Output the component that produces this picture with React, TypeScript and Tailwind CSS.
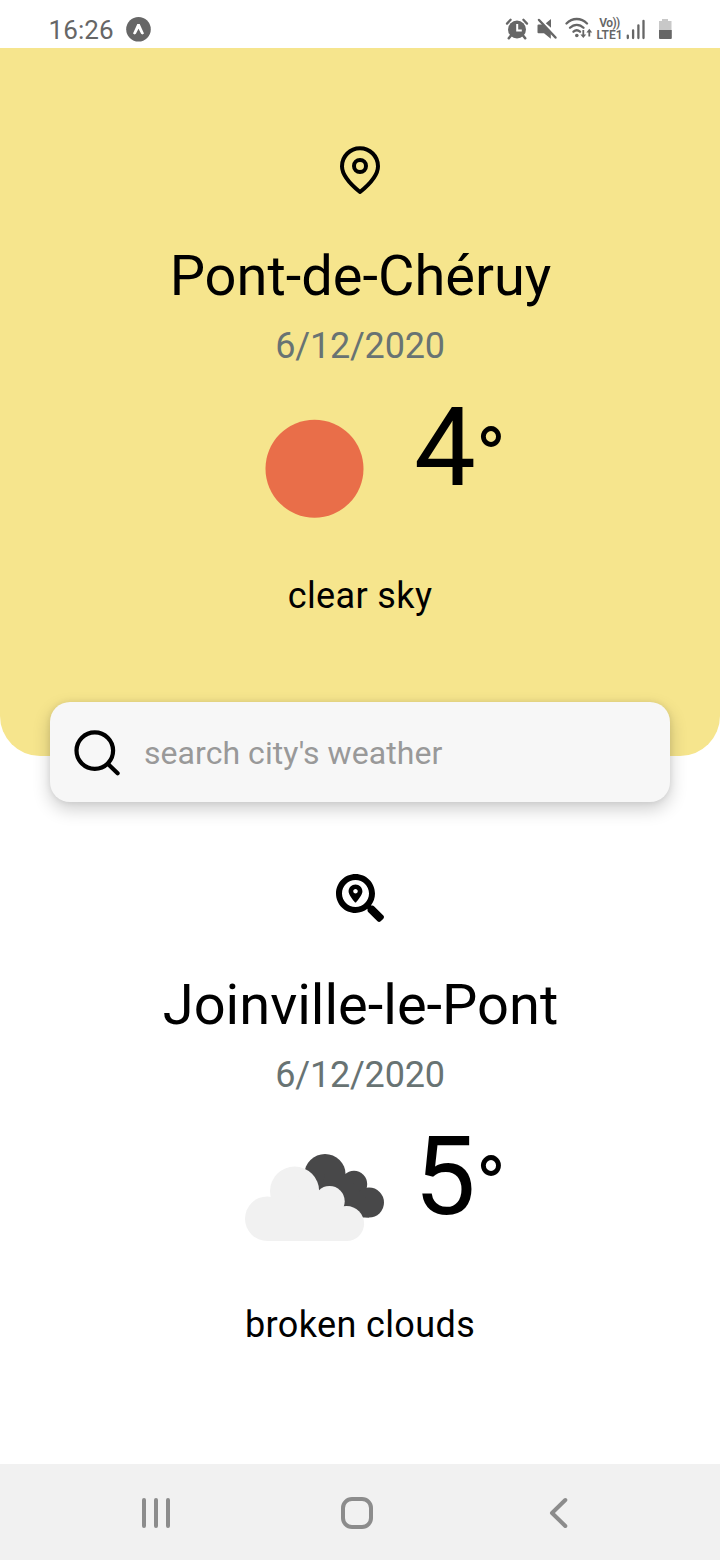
import type { ReactNode } from "react";
import { FaSearchLocation } from "react-icons/fa";

function StatusBar() {
  return (
    <header className="flex h-12 items-start bg-white text-[#666666]">
      <span className="ml-[48.5px] mt-[14px] w-[65.5px] whitespace-nowrap text-[26px] leading-[32px] tracking-[0.1px]">16:26</span>
      <svg className="ml-3 mt-4" width="26" height="26" viewBox="0 0 26 26">
        <circle cx="12.5" cy="13.2" r="12.3" fill="#666" />
        <path d="M11.3 8h2.4l4.3 9.4-1.6 1.1-1.3-.7-2.6-5-2.6 5-1.3.7L7 17.4Z" fill="#fff" />
      </svg>
      <div className="ml-auto mr-[47px] flex h-12 items-start pt-[17px]">
        <svg width="24" height="24" viewBox="0 0 24 24" className="mr-[7px]">
          <circle cx="12" cy="12.5" r="9" fill="#666" />
          <path d="M2 6.6 5.6 2.8M22 6.6l-3.6-3.8" fill="none" stroke="#666" strokeWidth="2.3" strokeLinecap="round" />
          <path d="m5.6 19-1.8 2.2M18.4 19l1.8 2.2" stroke="#666" strokeWidth="2.6" strokeLinecap="round" />
          <path d="M12.2 7v6.5h4.6" fill="none" stroke="#fff" strokeWidth="2" />
        </svg>
        <svg width="22" height="24" viewBox="0 0 22 24" className="mr-[7px]">
          <path d="M2.5 7.5h4.8l7.5 7.5v6.8L8 16.2H2.5A1 1 0 0 1 1.5 15.2V8.5a1 1 0 0 1 1-1ZM9.8 6.2 15 2v8.7Z" fill="#666" />
          <path d="m3 3 16.5 17.5" stroke="#666" strokeWidth="2.5" strokeLinecap="round" />
        </svg>
        <svg width="28" height="24" viewBox="0 0 28 24" className="mr-[4px]">
          <path d="M1.5 6.5c5.8-6 14.6-6 20.5 0M5 10.8c4-4 9.6-4 13.5 0M8.5 14.7c2-1.8 4.5-1.8 6.5 0" fill="none" stroke="#666" strokeWidth="2.3" strokeLinecap="round" />
          <circle cx="11.8" cy="18.5" r="1.8" fill="#666" />
          <path d="M18.3 13v5M24.3 14.5v5" stroke="#666" strokeWidth="1.8" />
          <path d="m15.4 17.4 2.9 3.6 2.9-3.6Zm6-2 2.9-3.6 2.9 3.6Z" fill="#666" />
        </svg>
        <div className="mr-[4px] flex w-[25px] flex-col items-center text-[12px] font-semibold leading-[12px]">
          <span className="whitespace-nowrap tracking-[-0.6px]">Vo))</span>
          <span className="whitespace-nowrap">LTE1</span>
        </div>
        <svg width="20" height="24" viewBox="0 0 20 24" className="mr-3">
          <path d="M1.8 18.6v2.5M7.1 13.3v7.8M12.4 8.3v12.8M17.5 3.8v17.3" stroke="#666" strokeWidth="2.3" strokeLinecap="round" />
        </svg>
        <svg width="15" height="24" viewBox="0 0 15 24">
          <path d="M4 2h6v2h3.5v9H1V4h3Z" fill="#c8c8c8" />
          <path d="M1 13h12.8v8a1 1 0 0 1-1 1H2a1 1 0 0 1-1-1Z" fill="#666" />
        </svg>
      </div>
    </header>
  );
}

interface WeatherProps {
  marker: ReactNode;
  city: string;
  date: string;
  picture: ReactNode;
  degrees: number;
  description: string;
}

function Weather({ marker, city, date, picture, degrees, description }: WeatherProps) {
  return (
    <div className="flex flex-col items-center text-black">
      <div className="h-12">{marker}</div>
      <h1 className="mt-[49px] whitespace-nowrap pl-px text-[56px] leading-[66px]">{city}</h1>
      <p className="mt-[16px] text-[36px] leading-[42px] tracking-[-0.2px] text-[#687373]">{date}</p>
      <div className="mt-[16px] flex h-[150px] w-[300px] items-start pl-[30px]">
        <div className="mt-[9px] h-[150px] w-[150px] shrink-0">{picture}</div>
        <p className="ml-[24px] mt-[1px] flex items-baseline whitespace-nowrap text-[110px] leading-[128px]">
          {degrees}
          <span className="text-[81px]">°</span>
        </p>
      </div>
      <p className="mt-[42px] whitespace-nowrap text-[36px] leading-[42px] tracking-[0.38px]">{description}</p>
    </div>
  );
}

function Pin() {
  return (
    <svg width="48" height="48" viewBox="0 0 48 48" fill="none" stroke="#000" strokeWidth="4">
      <path d="M42 20.2C42 29.5 34.5 37.5 24 46 13.5 37.5 6 29.5 6 20.2a18 18 0 0 1 36 0Z" strokeLinejoin="round" />
      <circle cx="24" cy="20" r="6" />
    </svg>
  );
}

function Sun() {
  return (
    <svg width="150" height="150" viewBox="0 0 150 150">
      <circle cx="74.5" cy="76.7" r="49" fill="#e96e49" />
    </svg>
  );
}

function Clouds() {
  return (
    <svg width="150" height="150" viewBox="240 1121 150 150">
      <g fill="#484849">
        <circle cx="325" cy="1174.5" r="20.6" />
        <circle cx="354" cy="1184" r="13.2" />
        <circle cx="369" cy="1202.6" r="15" />
        <path d="m325 1174 21 0 8 10 15 18v15.6h-20l-29-20Z" />
      </g>
      <g fill="#f1f1f1">
        <circle cx="267.3" cy="1218.7" r="22.3" />
        <circle cx="294.6" cy="1191.2" r="24.6" />
        <circle cx="329.5" cy="1201.2" r="15.2" />
        <circle cx="346.6" cy="1223.6" r="17.5" />
        <path d="M267 1197h27l24-5 12 9 17 22v18.1h-80Z" />
      </g>
    </svg>
  );
}

function SearchField() {
  return (
    <label className="relative mx-[50px] -mt-[54px] flex h-[100px] items-center rounded-[20px] bg-[#f7f7f7] shadow-[0_7px_18px_rgba(0,0,0,0.2),0_0_6px_rgba(0,0,0,0.08)]">
      <svg className="ml-[23px]" width="48" height="48" viewBox="0 0 48 48" fill="none" stroke="#000" strokeWidth="4.2" strokeLinecap="round">
        <circle cx="21.8" cy="22.6" r="18.3" />
        <path d="m35 36 9.6 9.2" />
      </svg>
      <input
        className="ml-[23px] mt-[2px] h-12 w-[480px] bg-transparent text-[32px] leading-[40px] tracking-[0.05px] outline-none placeholder:text-[#999999] placeholder:opacity-100"
        placeholder="search city's weather"
      />
    </label>
  );
}

function NavigationBar() {
  return (
    <nav className="mt-auto flex h-24 items-center bg-[#f1f1f1] pl-[138px]">
      <svg width="36" height="36" viewBox="0 0 36 36" stroke="#8c8c8c" strokeWidth="4" strokeLinecap="round" className="mt-[2px]">
        <path d="M6 5v26M18 5v26M30 5v26" />
      </svg>
      <svg width="36" height="36" viewBox="0 0 36 36" className="ml-[165px] mt-[2px]">
        <rect x="4" y="4" width="28" height="28" rx="9" fill="none" stroke="#8c8c8c" strokeWidth="4" />
      </svg>
      <svg width="36" height="36" viewBox="0 0 36 36" className="ml-[167px] mt-[2px]" fill="none" stroke="#8c8c8c" strokeWidth="4" strokeLinejoin="round" strokeLinecap="round">
        <path d="M23.3 5 10 18l13.3 13" />
      </svg>
    </nav>
  );
}

export default function App() {
  return (
    <div className="flex h-[1560px] w-[720px] flex-col overflow-hidden bg-white font-['Roboto',sans-serif]">
      <StatusBar />
      <section className="h-[708px] shrink-0 rounded-b-[40px] bg-[#f6e58d] pt-[98px]">
        <Weather marker={<Pin />} city="Pont-de-Chéruy" date="6/12/2020" picture={<Sun />} degrees={4} description="clear sky" />
      </section>
      <SearchField />
      <section className="pt-[73px]">
        <Weather
          marker={<FaSearchLocation size={48} className="-mt-px" />}
          city="Joinville-le-Pont"
          date="6/12/2020"
          picture={<Clouds />}
          degrees={5}
          description="broken clouds"
        />
      </section>
      <NavigationBar />
    </div>
  );
}
